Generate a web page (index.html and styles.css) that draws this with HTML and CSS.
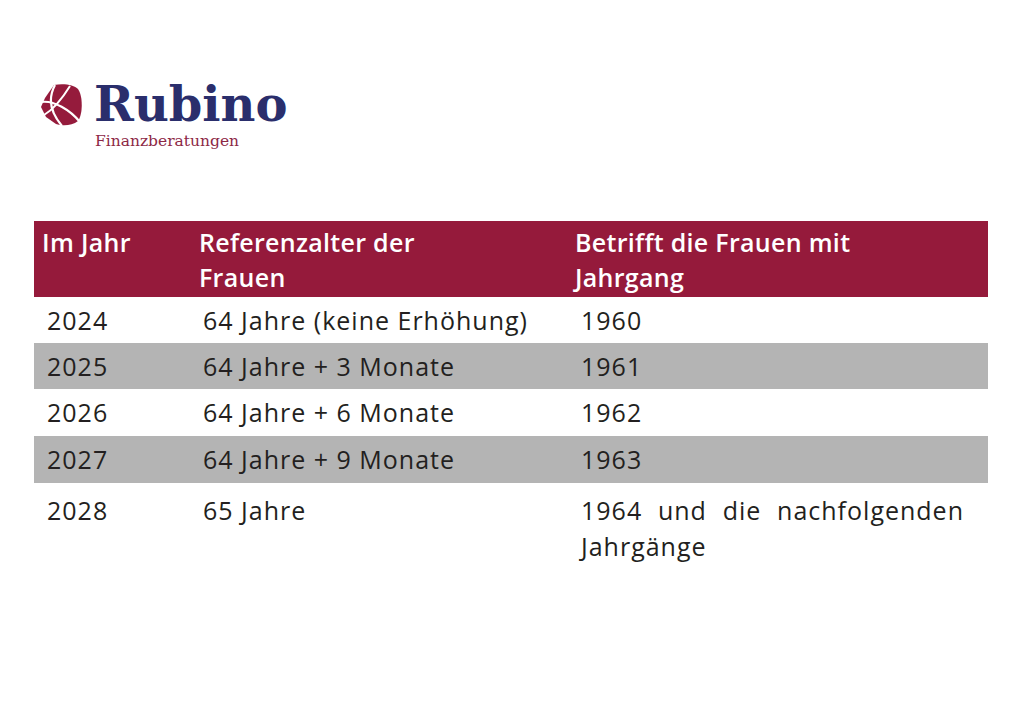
FILE: index.html
```html
<!DOCTYPE html>
<html lang="de">
<head>
<meta charset="utf-8">
<title>Rubino Finanzberatungen</title>
<link rel="stylesheet" href="styles.css">
</head>
<body>
<div class="page">
  <header class="logo">
    <div class="logo-top">
      <svg class="gem" viewBox="0 0 42 42" width="42" height="42" aria-hidden="true">
        <path d="M14 1 C24 -1 34 1 38 5 C43 12 43 30 38 37 C32 42 22 42 16 40 L6 33 L1 23 L5 14 Z" fill="#951b3c"/>
        <path d="M15 1 C8 14 10 28 22 42" fill="none" stroke="#fff" stroke-width="2.2"/>
        <path d="M1 18 C14 16 30 26 40 38" fill="none" stroke="#fff" stroke-width="2.2"/>
        <path d="M4 31 C14 25 22 15 30 2" fill="none" stroke="#fff" stroke-width="2"/>
      </svg>
      <span class="brand">Rubino</span>
    </div>
    <div class="tagline">Finanzberatungen</div>
  </header>

  <table class="rtable">
    <thead>
      <tr>
        <th class="c1">Im Jahr</th>
        <th class="c2">Referenzalter der<br>Frauen</th>
        <th class="c3">Betrifft die Frauen mit<br>Jahrgang</th>
      </tr>
    </thead>
    <tbody>
      <tr><td class="c1">2024</td><td class="c2">64 Jahre (keine Erhöhung)</td><td class="c3">1960</td></tr>
      <tr class="alt"><td class="c1">2025</td><td class="c2">64 Jahre + 3 Monate</td><td class="c3">1961</td></tr>
      <tr class="tall"><td class="c1">2026</td><td class="c2">64 Jahre + 6 Monate</td><td class="c3">1962</td></tr>
      <tr class="alt tall"><td class="c1">2027</td><td class="c2">64 Jahre + 9 Monate</td><td class="c3">1963</td></tr>
      <tr class="last"><td class="c1">2028</td><td class="c2">65 Jahre</td><td class="c3"><span class="just">1964 und die nachfolgenden Jahrgänge</span></td></tr>
    </tbody>
  </table>
</div>
</body>
</html>
```

FILE: styles.css
```css
html, body {
  margin: 0;
  padding: 0;
  background: #ffffff;
}

.page {
  padding: 80px 36px 0 34px;
  font-family: "Open Sans", "Noto Sans", sans-serif;
  color: #231f20;
}

.logo {
  padding-left: 6px;
}

.logo-top {
  display: flex;
  align-items: center;
  gap: 12px;
  height: 48px;
}

.gem {
  display: block;
  flex: none;
  margin-top: 2px;
}

.brand {
  font-family: "DejaVu Serif", "Liberation Serif", serif;
  font-weight: bold;
  font-size: 48px;
  line-height: 48px;
  color: #2a2e6c;
}

.tagline {
  margin: 4px 0 0 55px;
  font-family: "DejaVu Serif", "Liberation Serif", serif;
  font-size: 15.5px;
  line-height: 18px;
  color: #8d2846;
}

.rtable {
  margin-top: 71px;
  width: 954px;
  border-collapse: collapse;
  table-layout: fixed;
}

.rtable th,
.rtable td {
  box-sizing: border-box;
}

.rtable th {
  background: #951a3b;
  color: #ffffff;
  font-weight: 600;
  font-size: 25px;
  line-height: 35px;
  text-align: left;
  vertical-align: top;
  padding: 4px 0 2px 8px;
  letter-spacing: 0.3px;
}

.rtable th.c1 { width: 157px; }
.rtable th.c2 { width: 376px; }

.rtable td {
  font-size: 25px;
  line-height: 36px;
  padding: 5px 0 5px 13px;
  vertical-align: top;
  letter-spacing: 1px;
}

.rtable td.c2 { padding-left: 12px; }
.rtable td.c3 { padding-left: 14px; padding-right: 24px; }

.rtable tr.alt td {
  background: #b4b4b4;
}

.rtable tr.tall td {
  padding-bottom: 6px;
}

.rtable tr.last td {
  padding-top: 9px;
}

.just {
  display: block;
  text-align: justify;
}
```
